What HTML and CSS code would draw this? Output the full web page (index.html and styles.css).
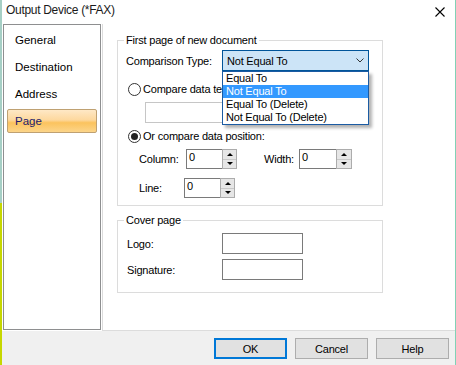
FILE: index.html
```html
<!DOCTYPE html>
<html lang="en">
<head>
    <meta charset="UTF-8">
    <title>Output Device (*FAX)</title>
    <link rel="stylesheet" href="styles.css">
</head>
<body>
    <div class="screen">
        <div class="edge-left"></div>
        <div class="dialog">
            <!-- Title bar -->
            <div class="titlebar">
                <span class="title">Output Device (*FAX)</span>
                <svg class="close" width="10" height="10" viewBox="0 0 10 10">
                    <path d="M0.5 0.5 L9.5 9.5 M9.5 0.5 L0.5 9.5" stroke="#000" stroke-width="1.1" fill="none"/>
                </svg>
            </div>

            <div class="main">
                <!-- Left navigation -->
                <ul class="nav">
                    <li>General</li>
                    <li>Destination</li>
                    <li>Address</li>
                    <li class="active">Page</li>
                </ul>

                <!-- Page settings -->
                <div class="content">
                    <div class="group group-first">
                        <span class="legend">First page of new document</span>

                        <div class="row row-combo">
                            <span class="label-wide">Comparison Type:</span>
                            <div class="combo">
                                <span>Not Equal To</span>
                                <svg width="8" height="5" viewBox="0 0 8 5">
                                    <path d="M0.5 0.5 L4 4 L7.5 0.5" stroke="#333" stroke-width="1" fill="none"/>
                                </svg>
                                <ul class="combo-list">
                                    <li>Equal To</li>
                                    <li class="selected">Not Equal To</li>
                                    <li>Equal To (Delete)</li>
                                    <li>Not Equal To (Delete)</li>
                                </ul>
                            </div>
                        </div>

                        <div class="row radio-row">
                            <span class="radio"></span>
                            <span>Compare data text:</span>
                        </div>
                        <div class="textbox"></div>

                        <div class="row radio-row radio-row-second">
                            <span class="radio checked"></span>
                            <span>Or compare data position:</span>
                        </div>

                        <div class="row spin-row">
                            <span class="label-column">Column:</span>
                            <div class="spinner">
                                <div class="spin-input">0</div>
                                <div class="spin-buttons">
                                    <span class="spin-up"></span>
                                    <span class="spin-down"></span>
                                </div>
                            </div>
                            <span class="label-width">Width:</span>
                            <div class="spinner spinner-wide">
                                <div class="spin-input">0</div>
                                <div class="spin-buttons">
                                    <span class="spin-up"></span>
                                    <span class="spin-down"></span>
                                </div>
                            </div>
                        </div>

                        <div class="row spin-row spin-row-line">
                            <span class="label-line">Line:</span>
                            <div class="spinner">
                                <div class="spin-input">0</div>
                                <div class="spin-buttons">
                                    <span class="spin-up"></span>
                                    <span class="spin-down"></span>
                                </div>
                            </div>
                        </div>
                    </div>

                    <div class="group group-cover">
                        <span class="legend">Cover page</span>
                        <div class="row field-row">
                            <span class="label-field">Logo:</span>
                            <div class="field-box"></div>
                        </div>
                        <div class="row field-row field-row-next">
                            <span class="label-field">Signature:</span>
                            <div class="field-box"></div>
                        </div>
                    </div>
                </div>
            </div>

            <!-- Dialog buttons -->
            <div class="buttons">
                <button class="btn btn-default">OK</button>
                <button class="btn">Cancel</button>
                <button class="btn">Help</button>
            </div>
        </div>
        <div class="edge-right"></div>
    </div>
</body>
</html>
```

FILE: styles.css
```css
body {
    margin: 0;
    font-family: "Liberation Sans", Arial, sans-serif;
    font-size: 11px;
    letter-spacing: -0.2px;
    color: #000;
}

.screen {
    display: flex;
    width: 456px;
    height: 365px;
    overflow: hidden;
}

.edge-left {
    width: 2px;
    background: linear-gradient(to bottom, #a6cfc5 0, #a6cfc5 203px, #c6d700 203px);
}

.edge-right {
    width: 1px;
    background: #80d2b6;
}

.dialog {
    flex: 1;
    display: flex;
    flex-direction: column;
    background: #f0f0f0;
}

.titlebar {
    height: 24px;
    background: #fff;
    display: flex;
    justify-content: space-between;
    align-items: flex-start;
    padding: 3px 10px 0 4px;
    box-sizing: border-box;
}

.title {
    font-size: 12px;
    line-height: 14px;
    letter-spacing: -0.3px;
    color: #1a1a1a;
}

.close {
    margin-top: 4px;
}

.main {
    display: flex;
    height: 307px;
    background: #fff;
}

.nav {
    list-style: none;
    margin: 0 1px 1px 1px;
    padding: 3px 0 0;
    width: 98px;
    box-sizing: border-box;
    border: 1px solid #8e8f90;
}

.nav li {
    height: 24px;
    box-sizing: border-box;
    margin: 0 3px 3px;
    padding-left: 7px;
    display: flex;
    align-items: center;
    font-size: 11.5px;
    letter-spacing: 0;
    border: 1px solid transparent;
}

.nav li.active {
    border-color: #bfa172;
    border-radius: 2px;
    background: linear-gradient(to bottom, #fee8c6 0%, #fdd89e 45%, #fbc35e 58%, #fcd58a 100%);
    color: #1b1b6c;
}

.content {
    flex: 1;
    border-left: 1px solid #dcdcdc;
    border-bottom: 1px solid #dcdcdc;
    padding: 16px 0 0 14px;
}

.group {
    width: 266px;
    box-sizing: border-box;
    border: 1px solid #dcdcdc;
    padding: 0 0 0 8px;
    display: flex;
    flex-direction: column;
    align-items: flex-start;
}

.group-first {
    height: 166px;
}

.group-cover {
    height: 73px;
    margin-top: 14px;
}

.legend {
    margin: -7px 0 0 -2px;
    padding: 0 2px;
    background: #fff;
    line-height: 13px;
}

.row {
    display: flex;
    align-items: center;
}

.row-combo {
    margin-top: 3px;
}

.label-wide {
    width: 96px;
}

.combo {
    position: relative;
    width: 147px;
    height: 21px;
    box-sizing: border-box;
    border: 1px solid #005499;
    background: #cce4f7;
    display: flex;
    align-items: center;
    justify-content: space-between;
    padding: 0 4px;
}

.combo-list {
    position: absolute;
    left: -1px;
    top: 20px;
    width: 147px;
    margin: 0;
    padding: 0;
    list-style: none;
    box-sizing: border-box;
    border: 1px solid #1b5ba3;
    background: #fff;
    box-shadow: 3px 3px 3px rgba(0, 0, 0, 0.3);
    z-index: 2;
}

.combo-list li {
    height: 13px;
    line-height: 13px;
    padding-left: 3px;
}

.combo-list li.selected {
    background: #3399ff;
    color: #fff;
}

.radio-row {
    margin: 11px 0 0 2px;
    height: 14px;
    gap: 2px;
}

.radio-row-second {
    margin-top: 6px;
}

.radio {
    width: 13px;
    height: 13px;
    box-sizing: border-box;
    border: 1px solid #333;
    border-radius: 50%;
    background: #fff;
    display: flex;
    justify-content: center;
    align-items: center;
}

.radio.checked::after {
    content: "";
    width: 7px;
    height: 7px;
    border-radius: 50%;
    background: #222;
}

.textbox {
    margin: 6px 0 0 19px;
    width: 215px;
    height: 21px;
    box-sizing: border-box;
    border: 1px solid #c6c6c6;
    background: #fff;
}

.spin-row {
    margin: 6px 0 0 13px;
    height: 20px;
}

.spin-row-line {
    margin-top: 9px;
}

.label-column {
    width: 47px;
}

.label-line {
    width: 45px;
}

.label-width {
    width: 35px;
    margin-left: 27px;
}

.spinner {
    display: flex;
    height: 20px;
}

.spin-input {
    width: 36px;
    box-sizing: border-box;
    border: 1px solid #7a7a7a;
    border-right: 0;
    padding: 1px 0 0 2px;
    line-height: 12px;
    background: #fff;
}

.spinner-wide .spin-input {
    width: 37px;
}

.spinner-wide .spin-buttons {
    width: 16px;
}

.spin-buttons {
    width: 15px;
    box-sizing: border-box;
    border: 1px solid #acacac;
    display: flex;
    flex-direction: column;
    background: #e6e6e6;
}

.spin-up,
.spin-down {
    flex: 1;
    display: flex;
    justify-content: center;
    align-items: center;
}

.spin-up {
    border-bottom: 1px solid #c8c8c8;
}

.spin-up::after {
    content: "";
    border-left: 3px solid transparent;
    border-right: 3px solid transparent;
    border-bottom: 3px solid #000;
}

.spin-down::after {
    content: "";
    border-left: 3px solid transparent;
    border-right: 3px solid transparent;
    border-top: 3px solid #000;
}

.field-row {
    margin: 6px 0 0 1px;
}

.field-row-next {
    margin-top: 5px;
}

.label-field {
    width: 95px;
}

.field-box {
    width: 81px;
    height: 21px;
    box-sizing: border-box;
    border: 1px solid #7a7a7a;
    background: #fff;
}

.buttons {
    flex: 1;
    display: flex;
    justify-content: flex-end;
    align-items: flex-start;
    gap: 8px;
    padding: 7px 6px 0 0;
}

.btn {
    width: 73px;
    height: 21px;
    box-sizing: border-box;
    border: 1px solid #adadad;
    background: #e1e1e1;
    font-family: inherit;
    font-size: 11px;
    letter-spacing: -0.2px;
    color: #000;
    padding: 0;
}

.btn-default {
    border: 2px solid #0078d7;
}
```
